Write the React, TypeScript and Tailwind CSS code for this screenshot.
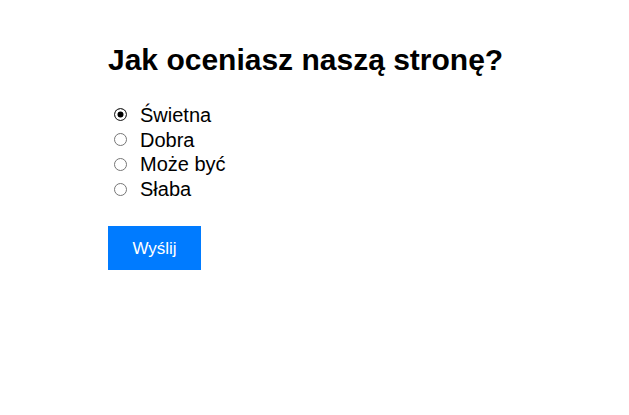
export default function App() {
  const options = ["Świetna", "Dobra", "Może być", "Słaba"];
  return (
    <div className="min-h-screen bg-white font-['Liberation_Sans',Arial,sans-serif] text-black">
      <div className="w-[413px] pt-[40px] ml-[108px]">
        <h2 className="text-[30px] font-bold leading-[40px] mb-[22.6px]">Jak oceniasz naszą stronę?</h2>
        <form className="flex flex-col items-start">
          {options.map((o, i) => (
            <label key={o} className="flex items-center h-[24.7px] text-[20px]">
              <input
                type="radio"
                name="rating"
                defaultChecked={i === 0}
                className="appearance-none w-[13px] h-[13px] ml-[6px] mr-[13px] rounded-full border border-[#767676] bg-white checked:border-[#333] checked:bg-black checked:shadow-[inset_0_0_0_2.5px_white]"
              />
              {o}
            </label>
          ))}
          <button
            type="button"
            className="mt-[25px] bg-[#007bff] text-white text-[17px] w-[93px] h-[44px]"
          >
            Wyślij
          </button>
        </form>
      </div>
    </div>
  );
}
